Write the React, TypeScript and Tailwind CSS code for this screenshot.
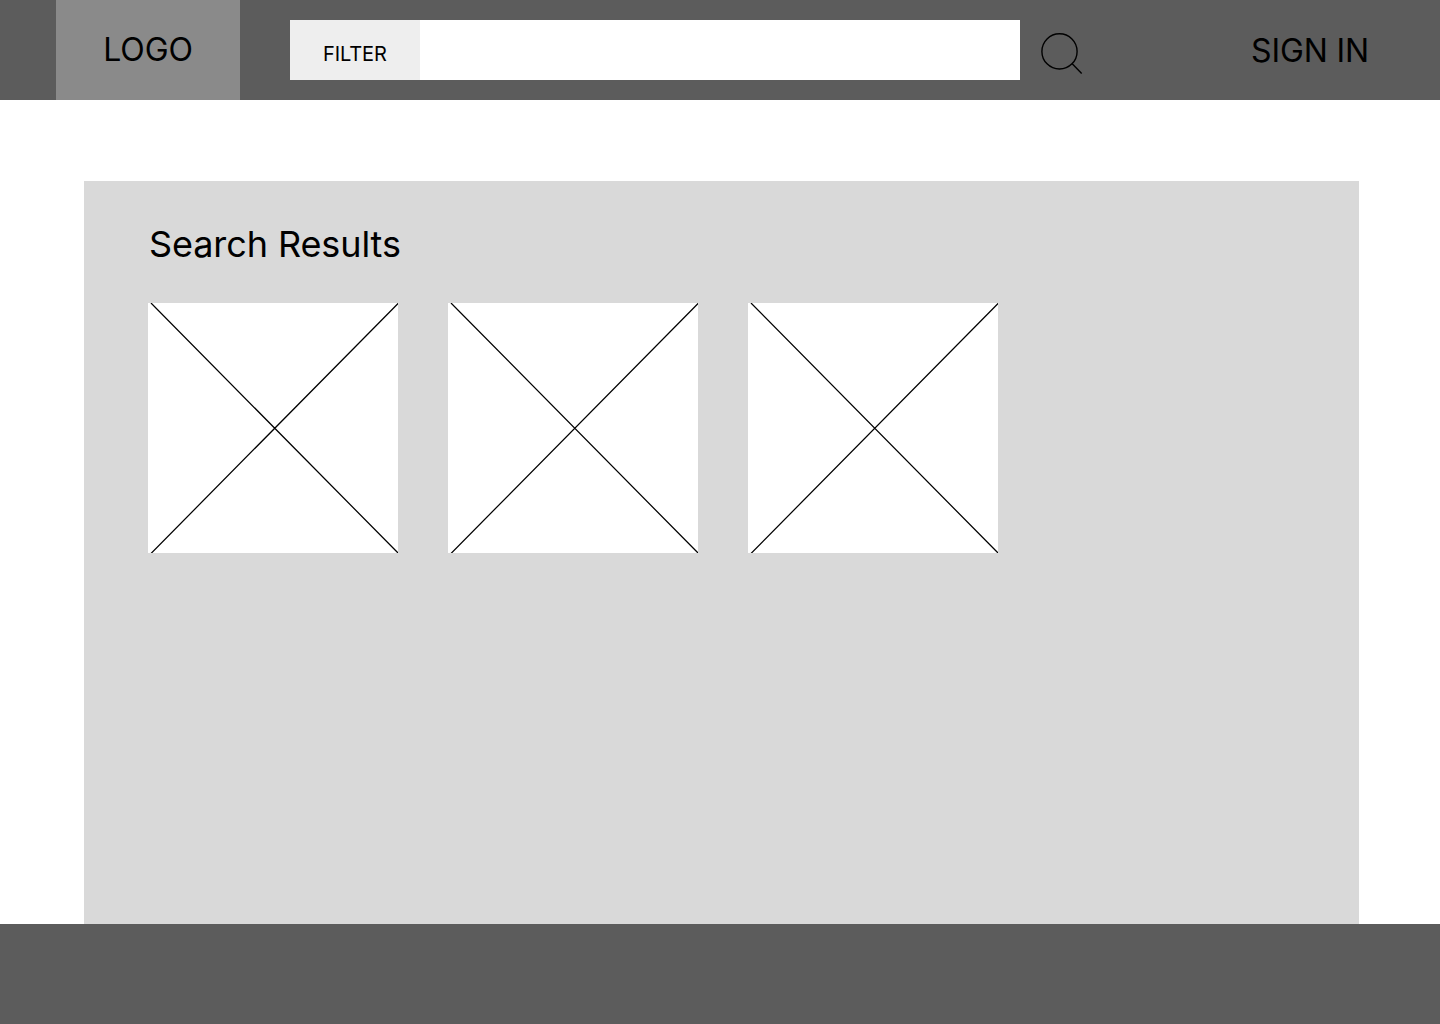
const results = [1, 2, 3];

function Placeholder() {
  return (
    <div className="w-[250px] h-[250px] bg-white">
      <svg width="250" height="250" viewBox="0 0 250 250" className="block">
        <path d="M3 0L250.5 250.5M250.5 0L3 250.5" stroke="#000" strokeWidth="1.25" fill="none" />
      </svg>
    </div>
  );
}

export default function App() {
  return (
    <div className="w-[1440px] h-[1024px] flex flex-col bg-white text-black overflow-hidden font-['Inter',sans-serif]">
      {/* Header */}
      <header className="h-[100px] shrink-0 flex items-center bg-[#5c5c5c]">
        <div className="ml-14 w-[184px] h-full flex items-center justify-center bg-[#8a8a8a] text-[32px] tracking-[-0.1px]">LOGO</div>
        <div className="ml-[50px] w-[730px] h-[60px] flex bg-white">
          <div className="w-[130px] h-full pl-[33px] pt-[21px] bg-[#eeeeee] text-[20px] leading-[26px] tracking-[-0.1px]">FILTER</div>
        </div>
        <svg width="44" height="44" viewBox="0 0 44 44" className="ml-[20px] mt-[6px]">
          <circle cx="19.5" cy="20.4" r="17.6" stroke="#000" strokeWidth="1.4" fill="none" />
          <path d="M32 32.5L41.7 42.5" stroke="#000" strokeWidth="1.4" fill="none" />
        </svg>
        <div className="ml-[167px] mt-[2px] text-[32px] tracking-[-0.1px]">SIGN IN</div>
      </header>

      {/* Results */}
      <div className="flex-1 pt-[81px] pl-[84px] pr-[81px]">
        <main className="h-full bg-[#d9d9d9] pl-[64px] pt-[41px]">
          <h1 className="ml-[1px] text-[36px] leading-[44px] font-normal tracking-[-0.1px]">Search Results</h1>
          <div className="mt-[37px] flex gap-[50px]">
            {results.map((r) => (
              <Placeholder key={r} />
            ))}
          </div>
        </main>
      </div>

      <footer className="h-[100px] shrink-0 bg-[#5c5c5c]" />
    </div>
  );
}
